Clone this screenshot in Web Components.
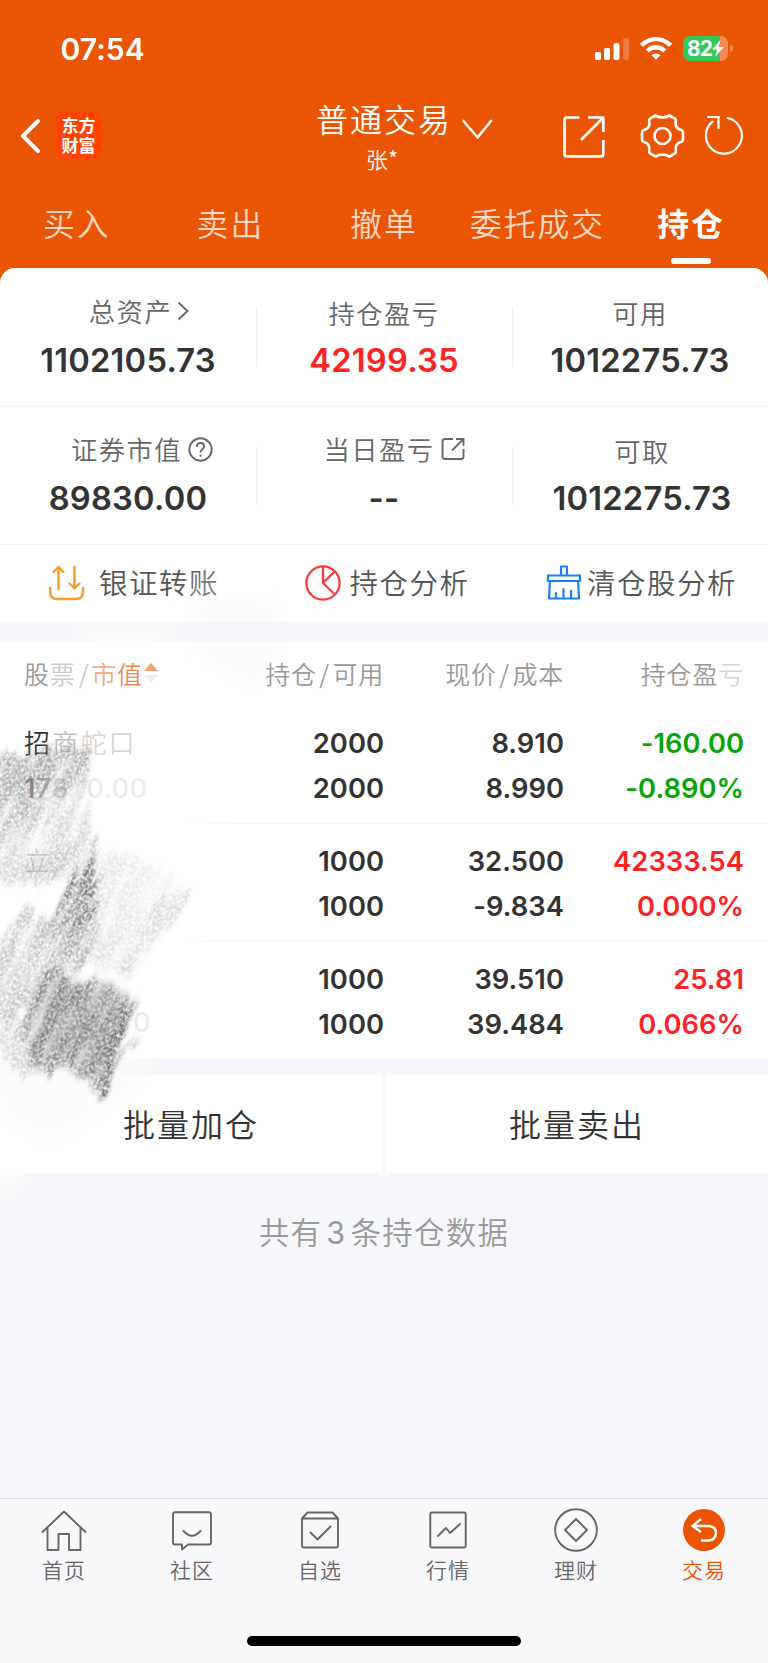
<!DOCTYPE html>
<html lang="zh-CN">
<head>
<meta charset="utf-8">
<title>持仓</title>
<style>
html,body{margin:0;padding:0}
body{width:768px;height:1663px;overflow:hidden;background:#f6f7fa;font-family:"Inter","Noto Sans CJK SC",sans-serif;color:#333}
</style>
</head>
<body>
<trade-app></trade-app>
<script>
const define = (name, html) => customElements.define(name, class extends HTMLElement {
  constructor() {
    super();
    const t = document.createElement('template');
    t.innerHTML = html;
    this.attachShadow({mode: 'open'}).append(t.content.cloneNode(true));
  }
});

define('status-bar', `
<style>
:host{display:flex;height:98px;box-sizing:border-box;padding:30px 35px 0 60.5px;align-items:flex-start;justify-content:space-between;color:#fff}
.time{font:600 30px/38px "Inter",sans-serif;letter-spacing:.1px}
.right{display:flex;align-items:flex-start;gap:11px;padding-top:5px}
.bat{display:flex;align-items:center;gap:2px}
.body{width:45px;height:25px;border-radius:7px;background:linear-gradient(90deg,#34c759 82%,#f28b54 82%);display:flex;align-items:center;padding-left:4px;box-sizing:border-box;font:700 21px/25px "Inter",sans-serif;letter-spacing:-.8px;margin-top:1px}
.nub{width:3px;height:7px;background:#f28b54;border-radius:0 3px 3px 0}
svg{display:block}
</style>
<span class="time">07:54</span>
<div class="right">
 <svg width="34" height="27" viewBox="0 0 34 27" fill="#fff"><rect y="17" width="6" height="8" rx="1.7"/><rect x="9" y="13" width="6" height="12" rx="1.7"/><rect x="18.500" y="8" width="6" height="17" rx="1.7"/><rect x="28" y="3" width="6" height="22" rx="1.700" opacity=".22"/></svg>
 <svg width="32" height="26" viewBox="0 0 32 26" fill="none" stroke="#fff" stroke-width="4.300"><path d="M1.500 10.400C9.500 2.100 22.500 2.100 30.500 10.400"/><path d="M7.200 16C12.200 11 19.800 11 24.800 16"/><path d="M11.500 20.300C14 17.900 18 17.900 20.500 20.300L16 24.800Z" fill="#fff" stroke="none"/></svg>
 <div class="bat"><div class="body">82<svg width="12" height="17" viewBox="0 0 12 17" fill="#fff"><path d="M8.500 0L0 9.500H5L3 17L12 7H6.800Z"/></svg></div><div class="nub"></div></div>
</div>`);

define('nav-header', `
<style>
:host{display:grid;grid-template-columns:310px 190px 1fr;height:90px;color:#fff}
.left{display:flex;padding:14px 0 0 20px;gap:14px;align-items:flex-start}
.logo{width:47px;height:47px;border-radius:9px;background:#ff4403;box-sizing:border-box;padding-top:4px;font:700 17px/20px "Inter","Noto Sans CJK SC",sans-serif;text-align:center}
.mid{padding-left:6px}
.t{display:flex;align-items:center;gap:10px;font:350 32px/44px "Noto Sans CJK SC",sans-serif;letter-spacing:2px;white-space:nowrap;margin-top:-3px}
.t svg{margin-top:24px}
.s{font:350 22px/30px "Noto Sans CJK SC",sans-serif;padding-left:50px;margin-top:3px}
.r{display:flex;padding:16px 0 0 62px;align-items:flex-start}
svg{display:block;flex:none}
</style>
<div class="left">
 <svg width="21" height="44" viewBox="0 0 21 44" fill="none" stroke="#fff" stroke-width="4" stroke-linecap="round" stroke-linejoin="round"><path d="M18 9L3 24L18 39"/></svg>
 <div class="logo">东方<br>财富</div>
</div>
<div class="mid"><div class="t">普通交易<svg width="31" height="21" viewBox="0 0 31 21" fill="none" stroke="#fff" stroke-width="2.600" stroke-linecap="round" stroke-linejoin="round"><path d="M1.500 2L15.500 18.500L29 2"/></svg></div><div class="s">张*</div></div>
<div class="r">
 <svg width="44" height="44" viewBox="0 0 44 44" fill="none" stroke="#fff" stroke-width="2.700" stroke-linecap="butt" stroke-linejoin="round"><path d="M17.500 3.500H5Q2.500 3.500 2.500 6V40Q2.500 42.300 5 42.300H39Q41.300 42.300 41.300 40V26M26 3.500H41.300V18M41 4L19 26"/></svg>
 <svg style="margin-left:34px" width="45" height="45" viewBox="0 0 45 45" fill="none" stroke="#fff" stroke-width="2.600" stroke-linejoin="round"><path d="M15.500 1.500Q22.500 5.500 29.500 1.500L35 4.600Q36 5.300 35.800 7C34.800 12 37 15 41.500 16.200Q43 16.800 43 18.500V25.500Q43 27.200 41.500 27.800C37 29 34.800 32 35.800 37Q36 38.700 35 39.400L29.500 42.500Q22.500 38.500 15.500 42.500L10 39.400Q9 38.700 9.200 37C10.200 32 8 29 3.500 27.800Q2 27.200 2 25.500V18.500Q2 16.800 3.500 16.200C8 15 10.200 12 9.200 7Q9 5.300 10 4.600Z"/><circle cx="22.500" cy="22" r="8"/></svg>
 <svg style="margin-left:19px" width="40" height="42" viewBox="0 0 40 42" fill="none" stroke="#fff" stroke-width="2.200" stroke-linecap="round"><path d="M23.500 4A18 18 0 1 1 8.500 7.700M4 3H15M14.500 3V14"/></svg>
</div>`);

define('tab-item', `
<style>
:host{display:flex;flex:1;flex-direction:column;align-items:center;height:78px;color:rgba(255,255,255,.78);font:350 31.800px/68px "Noto Sans CJK SC",sans-serif;letter-spacing:2px;white-space:nowrap}
:host([active]){color:#fff;font-weight:700}
i{display:none;width:40px;height:6px;border-radius:3px;background:#fff;margin:2px 0 0 0}
:host([active]) i{display:block}
</style><span><slot></slot></span><i></i>`);

define('stat-cell', `
<style>
:host{display:flex;flex-direction:column;align-items:center;width:256px;height:100%;box-sizing:border-box;position:relative;white-space:nowrap}
:host([line])::after{content:"";position:absolute;right:-1px;top:39px;width:1px;height:60px;background:#f0f0f0}
.l{display:flex;align-items:center;gap:6px;font:350 26.300px/36px "Noto Sans CJK SC",sans-serif;letter-spacing:1.500px;color:#666;margin-top:var(--lt,27px);padding-left:var(--lx,0)}
.v{font:600 32.700px/40px "Inter",sans-serif;color:var(--vc,#333);margin-top:var(--vt,9px);letter-spacing:.22px}
</style>
<div class="l"><span><slot></slot></span><slot name="icon"></slot></div><div class="v"><slot name="value"></slot></div>`);

define('action-item', `
<style>
:host{display:flex;align-items:center;height:77px;font:350 28.500px/40px "Noto Sans CJK SC",sans-serif;letter-spacing:1.500px;color:#555;white-space:nowrap;margin-top:-1px}
span{margin-top:-2px}
</style><slot name="icon"></slot><span><slot></slot></span>`);

define('holding-row', `
<style>
:host{display:grid;grid-template-columns:180px 180px 180px 180px;padding:15px 24px 0 24px;height:118px;box-sizing:border-box;text-align:right;font:600 27.300px/45px "Inter",sans-serif;letter-spacing:.05px;background:linear-gradient(90deg,#fff 24%,#f6f6f7 30%) bottom/100% 2px no-repeat}
:host([last]){background:none}
.n{text-align:left;font-weight:500;margin-top:-2px}
.p{color:var(--pc)}
</style>
<div class="n"><slot name="name"></slot></div><div><slot name="qty"></slot></div><div><slot name="price"></slot></div><div class="p"><slot name="profit"></slot></div>`);

define('bottom-item', `
<style>
:host{display:flex;flex:1;flex-direction:column;align-items:center;color:#666;font:350 21px/30px "Noto Sans CJK SC",sans-serif;letter-spacing:1px}
:host([active]){color:#ea5504}
.i{height:55px;display:flex}
</style><div class="i"><slot name="icon"></slot></div><span><slot></slot></span>`);

define('pencil-smudge', `
<style>:host{position:absolute;left:0;top:550px;width:330px;height:670px;pointer-events:none;display:block}svg{display:block}</style>
<svg width="330" height="670" viewBox="0 550 330 670">
<defs>
<filter id="g" x="-5%" y="-5%" width="110%" height="110%" color-interpolation-filters="sRGB">
 <feTurbulence type="fractalNoise" baseFrequency=".42 .3" numOctaves="4" seed="11" result="n"/>
 <feColorMatrix in="n" type="matrix" values="0 0 0 0 0  0 0 0 0 0  0 0 0 0 0  2.200 0 0 0 -.5" result="a"/>
 <feTurbulence type="fractalNoise" baseFrequency=".09 .018" numOctaves="2" seed="5" result="s"/>
 <feColorMatrix in="s" type="matrix" values="0 0 0 0 0  0 0 0 0 0  0 0 0 0 0  2 0 0 0 -.15" result="k"/>
 <feTurbulence type="fractalNoise" baseFrequency=".13 .02" numOctaves="2" seed="3" result="w"/>
 <feDisplacementMap in="SourceGraphic" in2="w" scale="22" xChannelSelector="A" yChannelSelector="G" result="d0"/>
 <feGaussianBlur in="d0" stdDeviation="1.500 3" result="b"/>
 <feComposite in="b" in2="a" operator="in" result="c"/>
 <feComposite in="c" in2="k" operator="in" result="e"/>
 <feGaussianBlur in="e" stdDeviation=".5"/>
</filter>
<filter id="b" x="-20%" y="-20%" width="140%" height="140%"><feGaussianBlur stdDeviation="8"/></filter>
<linearGradient id="v" x1="0" y1="0" x2=".6" y2="1"><stop offset="0" stop-color="#888" stop-opacity=".6"/><stop offset=".55" stop-color="#888" stop-opacity=".55"/><stop offset="1" stop-color="#aaa" stop-opacity=".1"/></linearGradient>
<linearGradient id="h" x1="0" y1="0" x2="1" y2="0"><stop offset="0" stop-color="#999" stop-opacity=".45"/><stop offset="1" stop-color="#aaa" stop-opacity=".1"/></linearGradient>
</defs>
<g filter="url(#b)" fill="#fff">
 <path d="M75 622H165V650H75Z" opacity=".5"/><path d="M160 622H290V650H160Z" opacity=".2"/>
 <path d="M-20 1040H125L118 1085L90 1090H-20Z"/><path d="M120 1050H160L145 1085H90Z" opacity=".5"/>
 <path d="M-5 1170H34L14 1195H-5Z" opacity=".6"/>
 <path d="M188 575L222 575V605L193 600Z" opacity=".3"/>
</g>
<g filter="url(#b)"><path d="M185 600L275 600L285 640L260 690L205 660Z" fill="#eef1f5" opacity=".2"/>
<path d="M0 1060L120 1060L140 1080L50 1140L0 1110Z" fill="#bbb" opacity=".04"/></g>
<g transform="rotate(24)" filter="url(#g)"><g transform="rotate(-24)">
 <path d="M-20 750L40 752L88 745L89 800L86 850L75 882L-20 885Z" fill="#aaa" opacity=".5"/>
 <path d="M-20 757L60 747L86 748V785L45 800L28 850L-20 850Z" fill="url(#v)"/>
 <path d="M25 855L80 845L70 880L30 878Z" fill="#999" opacity=".25"/>
 <path d="M92 850L150 860L194 895L128 975L82 965L58 935Z" fill="url(#h)"/>
 <path d="M162 895L194 893L128 978L120 970Z" fill="#999" opacity=".25"/>
 <path d="M92 841L98 842L90 918L62 938L44 930L70 880Z" fill="#666" opacity=".85"/>
 <path d="M60 930L92 910L100 935L84 970L62 952Z" fill="#888" opacity=".5"/>
 <path d="M26 905L60 925L96 960L42 990L15 1020L-20 1012V965Z" fill="#999" opacity=".6"/>
 <path d="M-20 1005L25 1020L50 1065L25 1082L-20 1030Z" fill="#888" opacity=".35"/>
 <path d="M134 1034L138 1040L112 1078L95 1088Z" fill="#777" opacity=".45"/>
 <path d="M44 965L66 980L86 984L93 970L100 980L112 984L118 995L133 996L124 1035L107 1092L95 1100L90 1083L63 1065L52 1078L30 1060L22 1030Z" fill="#6c6c6c" opacity=".85"/>
 <path d="M127 996L133 996L123 1042L107 1090L95 1098L98 1078L113 1050Z" fill="#555" opacity=".5"/>
</g></g>
<path d="M44 978L66 982L112 986L128 1000L119 1035L102 1080L63 1060L34 1054L28 1030Z" fill="#777" opacity=".22" filter="url(#b)"/>
</svg>`);

define('trade-app', `
<style>
:host{display:flex;flex-direction:column;width:768px;height:1663px;position:relative;background:#f6f7fa}
svg{display:block;flex:none}
.top{height:284px;background:#ea5504;flex:none}
.tabs{display:flex}
.card{margin-top:-16px;border-radius:15px 15px 0 0;background:#fff;height:354px;flex:none}
.stats{display:flex;height:138px;border-bottom:1px solid #f3f3f5;box-sizing:border-box}
.stats:first-child{height:139px}
.acts{display:grid;grid-template-columns:256px 241px 1fr;height:77px}
.list{margin-top:20px;background:#fff;height:416px;flex:none}
.hd{display:grid;grid-template-columns:180px 180px 180px 180px;height:64px;padding:0 24px;text-align:right;font:350 25px/62px "Noto Sans CJK SC",sans-serif;letter-spacing:.8px;color:#999;white-space:nowrap}
.hd .n{display:flex;align-items:center;height:62px}
.btns{display:grid;grid-template-columns:382px 382px;gap:4px;margin-top:17px;height:98px;flex:none}
.btns div{background:#fff;text-align:center;font:350 32px/96px "Noto Sans CJK SC",sans-serif;letter-spacing:2px}
.foot{margin-top:36px;text-align:center;font:350 30.500px/44px "Noto Sans CJK SC",sans-serif;letter-spacing:1.300px;color:#999;flex:1}
.foot span{font-family:"Inter",sans-serif;font-weight:400;padding:0 4px}
.bn{height:165px;box-sizing:border-box;border-top:1px solid #dcdcde;background:#f8f8fb;flex:none}
.bi{display:flex;height:137px}
.home{width:274px;height:10px;border-radius:5px;background:#000;margin:0 auto}
.cjk{font:350 26px/45px "Noto Sans CJK SC",sans-serif;letter-spacing:2.200px}
.num{font-weight:500;letter-spacing:.4px}
</style>
<div class="top"><status-bar></status-bar><nav-header></nav-header>
<div class="tabs"><tab-item>买入</tab-item><tab-item>卖出</tab-item><tab-item>撤单</tab-item><tab-item>委托成交</tab-item><tab-item active>持仓</tab-item></div></div>
<div class="card">
 <div class="stats">
  <stat-cell line style="--lt:25px;--vt:11px;--lx:22px">总资产<svg slot="icon" style="margin-left:-1px" width="12" height="20" viewBox="0 0 12 20" fill="none" stroke="#666" stroke-width="1.900"><path d="M1.500 1.500L10.500 10L1.500 18.500"/></svg><span slot="value">1102105.73</span></stat-cell>
  <stat-cell line style="--vc:#fb2323">持仓盈亏<span slot="value">42199.35</span></stat-cell>
  <stat-cell>可用<span slot="value">1012275.73</span></stat-cell>
 </div>
 <div class="stats">
  <stat-cell line style="--lt:24px;--vt:11px;--lx:28px">证券市值<svg slot="icon" width="25" height="25" viewBox="0 0 25 25" fill="none" stroke="#666" stroke-width="1.900"><circle cx="12.500" cy="12.500" r="11.200"/><path d="M8.800 10C8.800 4.500 16 5 16 9.500C16 12.300 12.500 12.300 12.500 15.600M12.500 17.500V19.700"/></svg><span slot="value">89830.00</span></stat-cell>
  <stat-cell line style="--lt:24px;--vt:11px;--lx:20px">当日盈亏<svg slot="icon" width="24" height="24" viewBox="0 0 24 24" fill="none" stroke="#666" stroke-width="1.900"><path d="M12 2H4Q1.500 2 1.500 4.500V19.500Q1.500 22 4 22H20Q22.500 22 22.500 19.500V12M15 2H22.500V9M22 2.500L11 13.500"/></svg><span slot="value">--</span></stat-cell>
  <stat-cell style="padding-left:4px;--lt:26px">可取<span slot="value">1012275.73</span></stat-cell>
 </div>
 <div class="acts">
  <action-item style="padding-left:49px"><svg slot="icon" style="margin-right:14px" width="36" height="36" viewBox="0 0 36 36" fill="none" stroke="#f49c28" stroke-width="2.400" stroke-linecap="round" stroke-linejoin="round"><path d="M9.500 24V2M4.500 7L9.500 2L14.500 7M25.500 2V23M20.500 18.500L25.500 23.500L30.500 18.500M1.200 23V27Q1.200 34 8 34H27Q34 34 34 27V23"/></svg>银证转账</action-item>
  <action-item style="padding-left:48.500px"><svg slot="icon" style="margin-right:9px" width="36" height="36" viewBox="0 0 36 36" fill="none" stroke="#fb3c3f" stroke-width="2.300" stroke-linejoin="round"><circle cx="18" cy="18" r="16.600"/><path d="M18 1.500V18L29.500 6.500M18 18L30 29.500"/></svg>持仓分析</action-item>
  <action-item style="padding-left:49px"><svg slot="icon" style="margin-right:5px" width="36" height="36" viewBox="0 0 36 36" fill="none" stroke="#1b80f5" stroke-width="2.200" stroke-linejoin="round" stroke-linecap="round"><path d="M15 10.500V1.500H21V10.500M2 10.500H34V16H2ZM4 16L3 33.500H33L32 16M10 33V28M17.500 33V24M25 33V25.500"/></svg>清仓股分析</action-item>
 </div>
</div>
<div class="list">
 <div class="hd"><div class="n"><span>股<span style="opacity:.5">票</span></span><span style="opacity:.55;padding:0 2px 0 3px">/</span><span style="color:#ea5504;opacity:.5">市</span><span style="color:#ea5504;opacity:.7">值</span><svg style="margin-left:1px" width="14" height="22" viewBox="0 0 14 22"><path d="M0 9L7 1L14 9Z" fill="#f5a078"/><path d="M0 13L7 21L14 13Z" fill="#ececec"/></svg></div><div>持仓<span style="padding:0 2.500px">/</span>可用</div><div>现价<span style="padding:0 2.500px">/</span>成本</div><div>持仓盈<span style="opacity:.4">亏</span></div></div>
 <holding-row style="--pc:#08a408"><span slot="name"><span class="cjk">招<span style="opacity:.3">商</span><span style="opacity:.2">蛇口</span></span><br><span class="num"><span style="opacity:.65">1</span><span style="opacity:.4">7</span><span style="opacity:.2">8</span><span style="opacity:.02">2</span><span style="opacity:.09">0.00</span></span></span><span slot="qty">2000<br>2000</span><span slot="price">8.910<br>8.990</span><span slot="profit">-160.00<br>-0.890%</span></holding-row>
 <holding-row style="--pc:#fb2323"><span slot="name"><span class="cjk" style="opacity:.22">立</span></span><span slot="qty">1000<br>1000</span><span slot="price">32.500<br>-9.834</span><span slot="profit">42333.54<br>0.000%</span></holding-row>
 <holding-row last style="--pc:#fb2323"><span slot="name"><br><span class="num" style="opacity:.09;padding-left:109px">0</span></span><span slot="qty">1000<br>1000</span><span slot="price">39.510<br>39.484</span><span slot="profit">25.81<br>0.066%</span></holding-row>
</div>
<div class="btns"><div>批量加仓</div><div>批量卖出</div></div>
<div class="foot">共有<span>3</span>条持仓数据</div>
<div class="bn"><div class="bi">
 <bottom-item><svg slot="icon" width="46" height="56" viewBox="0 0 46 56" fill="none" stroke="#666" stroke-width="1.900" stroke-linecap="round" stroke-linejoin="round"><path d="M1.500 33L23 12.500L44.500 33M6.500 29V51H17.500V35H28V51H39.500V29"/></svg>首页</bottom-item>
 <bottom-item><svg slot="icon" width="42" height="56" viewBox="0 0 42 56" fill="none" stroke="#666" stroke-width="1.900" stroke-linecap="round" stroke-linejoin="round"><path d="M4 13.200H38Q40 13.200 40 15.200V43.500Q40 45.500 38 45.500H17L11 50.500V45.500H4Q2 45.500 2 43.500V15.200Q2 13.200 4 13.200ZM12.500 32Q21 41.500 29.500 32"/></svg>社区</bottom-item>
 <bottom-item><svg slot="icon" width="40" height="56" viewBox="0 0 40 56" fill="none" stroke="#666" stroke-width="1.900" stroke-linecap="round" stroke-linejoin="round"><path d="M2 19.500L7.500 13.500H32.500L38 19.500V46.500Q38 48.500 36 48.500H4Q2 48.500 2 46.500ZM2 19.500H38M10.500 33.500L17.500 40.500L30.500 27.500"/></svg>自选</bottom-item>
 <bottom-item><svg slot="icon" width="38" height="56" viewBox="0 0 38 56" fill="none" stroke="#666" stroke-width="1.900" stroke-linecap="round" stroke-linejoin="round"><rect x="1.300" y="13.500" width="35.400" height="35" rx="1.500"/><path d="M9 37L17 29L21 34L31 25"/></svg>行情</bottom-item>
 <bottom-item><svg slot="icon" width="44" height="56" viewBox="0 0 44 56" fill="none" stroke="#666" stroke-width="1.900" stroke-linejoin="round"><circle cx="22" cy="31" r="20.800"/><path d="M22 20L33 31L22 42L11 31Z"/></svg>理财</bottom-item>
 <bottom-item active><svg slot="icon" width="42" height="56" viewBox="0 0 42 56" fill="none" stroke="#fff" stroke-width="2.400"><circle cx="21" cy="31" r="21" fill="#ea5504" stroke="none"/><path d="M18 20L9.500 27L18 33M10 27H26Q33.500 28 33 34.500Q32 41.500 25 41.500H18"/></svg>交易</bottom-item>
</div><div class="home"></div></div>
<pencil-smudge></pencil-smudge>`);
</script>
</body>
</html>
